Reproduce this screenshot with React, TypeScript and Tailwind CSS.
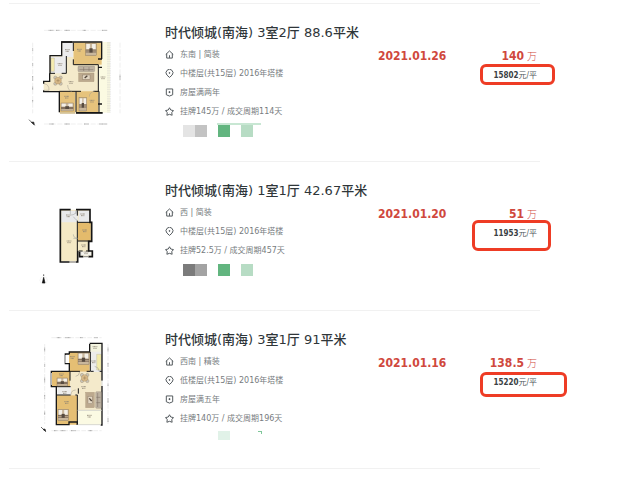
import type { ReactNode } from 'react'

type IconName = 'house' | 'pin' | 'badge' | 'star'

const iconShapes: Record<IconName, ReactNode> = {
  house: (
    <>
      <path d="M2 12 12 2.500 22 12M4.500 10v11.500h15V10" />
      <path d="M12 21v-7" />
    </>
  ),
  pin: (
    <>
      <path d="M12 22.500 5 16a9.200 9.200 0 1 1 14 0Z" />
      <circle cx="12" cy="10.500" r="1.200" fill="currentColor" />
    </>
  ),
  badge: (
    <>
      <path d="M3.500 2.500h17v15.500L12 21.500 3.500 18Z" />
      <path d="M12 8.500v5M9.500 11h5" />
    </>
  ),
  star: <path d="m12 2 3.300 6 7.200 1.500-4.500 5.500 1 7-7-2.500L5 22l1-7L1.500 9.500 8.700 8Z" />,
}

const Icon = ({ name }: { name: IconName }) => (
  <svg viewBox="0 0 24 24" className="size-[9px] shrink-0 text-[#50565a]" fill="none" stroke="currentColor" strokeWidth="2.600" strokeLinejoin="round" aria-hidden="true">
    {iconShapes[name]}
  </svg>
)

const Bed = ({ x, y, w, h }: { x: number; y: number; w: number; h: number }) => (
  <g>
    <rect x={x} y={y} width={w} height={h} fill="#c9b79c" stroke="#6f6253" />
    <rect x={x + 2} y={y + 2} width={w / 3} height={h / 2 - 3} fill="#f4f0e8" />
    <rect x={x + w * 0.6} y={y + 2} width={w / 3} height={h / 2 - 3} fill="#f4f0e8" />
    <path d={`M${x} ${y + h * 0.55}h${w}M${x} ${y + h * 0.7}h${w}`} stroke="#7d6a58" strokeWidth="3" />
    <rect x={x + w * 0.35} y={y + h * 0.4} width={w * 0.3} height={h * 0.35} fill="#574b40" />
  </g>
)

const Sofa = ({ x, y, turned }: { x: number; y: number; turned?: boolean }) => (
  <g transform={turned ? `translate(${x} ${y}) rotate(90)` : `translate(${x} ${y})`}>
    <rect width="50" height="17" rx="3" fill="#bdb2a2" stroke="#8b8071" />
    <path d="M4 11h42M17 3v12M33 3v12" stroke="#786d60" strokeWidth="1.500" fill="none" />
    <rect x="2" y="21" width="46" height="26" fill="#bca98e" stroke="#a08c70" />
    <rect x="14" y="27" width="22" height="13" fill="#e2d6c2" stroke="#796956" />
    <path d="m20 36 8-7" stroke="#4f4338" strokeWidth="4" />
  </g>
)

const Table = ({ x, y }: { x: number; y: number }) => (
  <g stroke="#94805f">
    <circle cx={x - 8} cy={y - 9} r="5" fill="#c8c4b8" />
    <circle cx={x + 8} cy={y - 9} r="5" fill="#c8c4b8" />
    <circle cx={x - 8} cy={y + 9} r="5" fill="#c8c4b8" />
    <circle cx={x + 8} cy={y + 9} r="5" fill="#c8c4b8" />
    <circle cx={x} cy={y} r="10" fill="#d8b988" />
    <path d={`M${x - 5} ${y}h10M${x} ${y - 5}v10`} stroke="#78623f" />
  </g>
)

// Room captions on the plans are only a couple of pixels tall
const Mark = ({ x, y }: { x: number; y: number }) => (
  <path d={`M${x - 7} ${y - 2}h14M${x - 5} ${y + 3}h10`} stroke="#8a8171" strokeWidth="2.500" strokeDasharray="3 1" />
)

const PlanA = () => (
  <g transform="translate(0 18)" fill="none">
    <path d="M72 1h192M72 282h192M38 38v212M300 38v212" stroke="#dedede" strokeWidth="1.500" strokeDasharray="15 5" />
    <path d="M86 1h14M108 1h10M134 1h16M188 1h10M246 1h14M88 282h14M134 282h16M192 282h14M238 282h22M38 55v8M38 100v8M38 138v14M38 170v10M38 210v8M300 134v16" stroke="#a8a8a8" strokeWidth="3" strokeDasharray="3 1" />
    <path d="M125 36h111v212H118v-64H71v-30h18V77h37Z" fill="#f4eacb" />
    <path d="M236 36h34v212h-34Z" fill="#fbfae2" />
    <path d="M161 38h84v66h-84Z" fill="#e6c37c" />
    <path d="M118 184h47v63h-47ZM168 184h67v63h-67Z" fill="#e6c37c" />
    <path d="M127 38h32v43h-32ZM92 80h47v50H92Z" fill="#ececed" />
    <path d="M93 84h10v40H93Z" fill="#f6ecaf" stroke="#a9a394" />
    <path d="M270 36v212M264 36v212" stroke="#cfcfcb" strokeWidth="2" strokeDasharray="5 2" />
    <path d="M125 77V36h120v51M90 130V77h37M89 130v24H71v7M71 181v4h47v62M168 248h79" stroke="#171717" strokeWidth="4" />
    <path d="M160 38v25M160 88v16h75M139 78v52h-14M105 130H90M118 184h50v62M168 184h15M220 184h17v62M235 104v80" stroke="#171717" strokeWidth="3" />
    <path d="M124 36h32M168 249h80" stroke="#171717" strokeWidth="5" />
    <path d="M120 249h46" stroke="#c9b37f" strokeWidth="4" />
    <path d="M234 87h12M234 112h12M234 222h12" stroke="#171717" strokeWidth="4" />
    <path d="M72 161q16 2 15 20H70M143 165q1 18 13 19M224 184q-16 2-16 16" stroke="#a59f93" strokeWidth="1.500" />
    <Bed x={197} y={40} w={32} h={37} />
    <Bed x={177} y={203} w={23} h={40} />
    <Bed x={123} y={219} w={37} h={24} />
    <Sofa x={174} y={108} />
    <Table x={114} y={152} />
    <Mark x={178} y={60} />
    <Mark x={142} y={61} />
    <Mark x={120} y={103} />
    <Mark x={153} y={157} />
    <Mark x={249} y={143} />
    <Mark x={140} y={201} />
    <Mark x={216} y={213} />
    <path d="m27 269 17 17M34 277l9 7-2-8Z" stroke="#222" strokeWidth="2" fill="#222" />
  </g>
)

const PlanB = () => (
  <g transform="translate(0 39)" fill="none">
    <path d="M121 44h87v38h7v57h-9v29h10v17h-38v-15h-6v29h-51Z" fill="#f4e9c5" />
    <path d="M124 47h49v35h-49ZM176 47h31v34h-31Z" fill="#e9eaeb" />
    <path d="M174 83h38v54h-38Z" fill="#e4bb6c" />
    <path d="M175 169h40v13h-40Z" fill="#f5f4ed" />
    <path d="M152 44h-31v157h28M167 201h6v-33M168 44h42v38h5v57h-9v29h11v17h-12M190 185h-11v-15" stroke="#151515" strokeWidth="5" />
    <path d="M172 46v16M172 77v91M172 82h43M173 138h39M176 168h12M198 168h10" stroke="#151515" strokeWidth="3" />
    <path d="M151 45v12M168 45v12M153 60q14 0 17-13M160 65q9 12 13 12M160 130h13q-13-1-13-12M182 170v12" stroke="#969b98" strokeWidth="1.500" />
    <path d="M149 201h18M190 185h16" stroke="#9d9b94" strokeWidth="4" />
    <Mark x={145} y={62} />
    <Mark x={188} y={59} />
    <Mark x={194} y={107} />
    <Mark x={147} y={140} />
    <Mark x={191} y={152} />
    <Mark x={198} y={173} />
    <circle cx="71" cy="256" r="11" stroke="#dedede" />
    <path d="M71 238v5M71 247l-4 17h8Z" fill="#111" stroke="#111" strokeWidth="2" />
  </g>
)

const PlanC = () => (
  <g transform="translate(0 12)" fill="none">
    <path d="M94 8h151M94 287h151M74 27v240M264 27v240" stroke="#dedede" strokeWidth="1.500" strokeDasharray="14 4" />
    <path d="M110 8h12M136 8h16M180 8h9M223 8h10M102 287h10M122 287h14M153 287h14M206 287h12M74 38v12M74 88v8M74 128v14M74 180v12M74 230v10M264 38v12M264 84v12M264 146v8M264 190v14M264 250v12" stroke="#a8a8a8" strokeWidth="3" strokeDasharray="3 1" />
    <path d="M209 25h36v86h-36ZM112 155h43v30h-43Z" fill="#ededeb" />
    <path d="M148 111h97v120h-73v-51h-19v-25h-5Z" fill="#f4eacb" />
    <path d="M173 226h72v43h-72Z" fill="#fbfae3" />
    <path d="M147 50h62v60h-62ZM94 110h56v45H94ZM110 181h61v88h-61Z" fill="#e5bf74" />
    <path d="M209 27h36v23h-36Z" fill="#f3f4df" />
    <path d="M230 58h14v47h-14Z" fill="#f3ebaa" stroke="#aaa69b" />
    <path d="M209 25h37v112M246 153v117h-4M209 27v24h-61v7M148 109V86h-12V57h12M150 109H94v46h15v114h38v-8h25v9" stroke="#181818" strokeWidth="4" />
    <path d="M211 51v58h-11M180 109h-33M150 109v28M109 180h43M109 155h43M166 180h6v90M175 160v16M212 109h9M239 109h7" stroke="#181818" strokeWidth="3" />
    <path d="M173 269h70M173 226h72M246 137v16" stroke="#d7d7d0" strokeWidth="3" />
    <path d="M94 114v36M136 60v24" stroke="#b5b5b5" strokeWidth="4" />
    <path d="M179 110q-1 13-12 14M153 179q0-13 14-14M238 110q-1-14-14-16" stroke="#989389" strokeWidth="1.500" />
    <Bed x={174} y={54} w={33} h={35} />
    <Bed x={111} y={129} w={32} h={24} />
    <Bed x={114} y={223} w={31} h={34} />
    <Sofa x={244} y={170} turned />
    <Table x={194} y={129} />
    <Mark x={157} y={67} />
    <Mark x={225} y={37} />
    <Mark x={221} y={80} />
    <Mark x={124} y={119} />
    <Mark x={134} y={172} />
    <Mark x={191} y={157} />
    <Mark x={140} y={202} />
    <Mark x={208} y={243} />
    <path d="m63 276 14 14M69 283l8 6-2-7Z" stroke="#222" strokeWidth="2" fill="#222" />
  </g>
)

const deals = [
  {
    title: '时代倾城(南海) 3室2厅 88.6平米',
    plan: <PlanA />,
    planName: '3室2厅户型图',
    details: [
      { icon: 'house', text: '东南 | 简装' },
      { icon: 'pin', text: '中楼层(共15层) 2016年塔楼' },
      { icon: 'badge', text: '房屋满两年' },
      { icon: 'star', text: '挂牌145万 / 成交周期114天' },
    ],
    blocks: ['bg-[#e4e4e4]', 'bg-[#c3c3c3]', 'bg-[#62b57f]', 'bg-[#b7dcc4]'],
    accent: 'line',
    date: '2021.01.26',
    total: '140',
    unit: '15802',
    ring: '-top-[2px] bottom-0 -left-[14px] -right-[18px]',
  },
  {
    title: '时代倾城(南海) 1室1厅 42.67平米',
    plan: <PlanB />,
    planName: '1室1厅户型图',
    details: [
      { icon: 'house', text: '西 | 简装' },
      { icon: 'pin', text: '中楼层(共15层) 2016年塔楼' },
      { icon: 'star', text: '挂牌52.5万 / 成交周期457天' },
    ],
    blocks: ['bg-[#7b7b7b]', 'bg-[#a3a3a3]', 'bg-[#62b57f]', 'bg-[#b7dcc4]'],
    accent: '',
    date: '2021.01.20',
    total: '51',
    unit: '11953',
    ring: '-top-1 -bottom-2 -left-[22px] -right-[14px]',
  },
  {
    title: '时代倾城(南海) 3室1厅 91平米',
    plan: <PlanC />,
    planName: '3室1厅户型图',
    details: [
      { icon: 'house', text: '西南 | 精装' },
      { icon: 'pin', text: '低楼层(共15层) 2016年塔楼' },
      { icon: 'badge', text: '房屋满五年' },
      { icon: 'star', text: '挂牌140万 / 成交周期196天' },
    ],
    blocks: ['bg-transparent', 'bg-transparent', 'bg-[#e1f2e8]', 'bg-transparent'],
    accent: 'corner',
    date: '2021.01.16',
    total: '138.5',
    unit: '15220',
    ring: '-top-px -bottom-[5px] -left-[14px] -right-[30px]',
  },
]

const App = () => {
  return (
    <main className="bg-white pt-[3px] pl-[9px] pr-[100px]">
      <ul className="border-b border-[#f1f1f1]">
        {deals.map((deal) => (
          <li key={deal.date} className="flex items-start border-t border-[#f1f1f1] pt-5 pb-6 pl-[11px]">
            <svg viewBox="0 0 330 312" className="h-[104px] w-[110px] shrink-0" role="img" aria-label={deal.planName}>
              {deal.plan}
            </svg>
            <div className="ml-[35px] min-w-0 flex-1 font-['DejaVu_Sans','Noto_Sans_CJK_SC',sans-serif]">
              <h2 className="mb-[3px] text-[13px] leading-[18px] font-medium whitespace-nowrap text-[#2f3639]">{deal.title}</h2>
              <ul className="text-[8px] leading-[19px] text-[#777c80]">
                {deal.details.map((item) => (
                  <li key={item.text} className="flex items-center gap-[6px] whitespace-nowrap">
                    <Icon name={item.icon as IconName} />
                    {item.text}
                  </li>
                ))}
              </ul>
              <div className={`relative ml-[18px] flex ${deal.accent === 'corner' ? 'mt-[3px] mb-1 h-[9px]' : 'mt-1 h-3'}`}>
                <span className={`w-3 ${deal.blocks[0]}`} />
                <span className={`mr-[11px] w-3 ${deal.blocks[1]}`} />
                <span className={`mr-[11px] w-3 ${deal.blocks[2]}`} />
                <span className={`w-3 ${deal.blocks[3]}`} />
                {deal.accent === 'line' && <span className="absolute -top-[2px] left-[34px] h-[2px] w-11 bg-[#c8e7d3]" />}
                {deal.accent === 'corner' && <span className="absolute top-0 left-[75px] h-[3px] w-1 border-t border-r border-[#7fc79a]" />}
              </div>
            </div>
            <div className="w-[69px] shrink-0 pt-[23px] font-['DejaVu_Sans_Condensed','DejaVu_Sans',sans-serif] text-xs leading-[19px] font-bold text-[#d0483d]">
              {deal.date}
            </div>
            <div className="flex w-[93px] shrink-0 flex-col items-end pt-[22px] pr-[3px] font-['DejaVu_Sans_Condensed','Noto_Sans_CJK_SC',sans-serif] leading-[19px]">
              <p className="h-5 leading-[17px] text-[#d0483d]">
                <b className="text-xs leading-[17px]">{deal.total}</b>
                <span className="ml-[3px] text-[10px] font-light">万</span>
              </p>
              <p className="relative h-[19px] text-[8px] text-[#50565a]">
                <b className="text-[#394043]">{deal.unit}</b>元/平
                <span className={`absolute rounded-md border-3 border-[#ee3c25] ${deal.ring}`} />
              </p>
            </div>
          </li>
        ))}
      </ul>
    </main>
  )
}

export default App
